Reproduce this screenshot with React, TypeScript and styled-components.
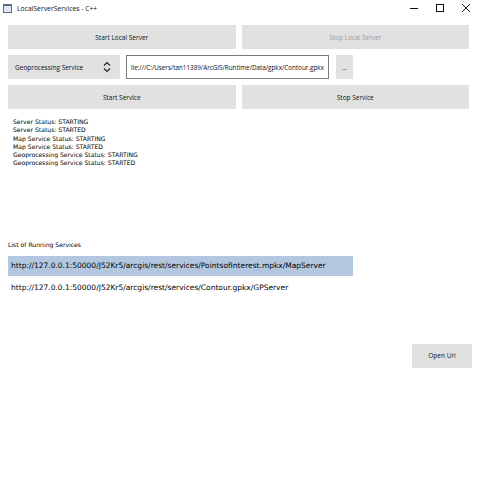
import styled, { createGlobalStyle } from 'styled-components';

const GlobalStyle = createGlobalStyle`
  html, body {
    margin: 0;
    padding: 0;
    background: #ffffff;
  }
  body {
    font-family: 'Liberation Sans', Arial, sans-serif;
    color: #000000;
  }
`;

const runningServices = [
  'http://127.0.0.1:50000/J52Kr5/arcgis/rest/services/PointsofInterest.mpkx/MapServer',
  'http://127.0.0.1:50000/J52Kr5/arcgis/rest/services/Contour.gpkx/GPServer',
];

const statusLines = [
  'Server Status: STARTING',
  'Server Status: STARTED',
  'Map Service Status: STARTING',
  'Map Service Status: STARTED',
  'Geoprocessing Service Status: STARTING',
  'Geoprocessing Service Status: STARTED',
];

const App = (): JSX.Element => {
  return (
    <>
      <GlobalStyle />
      <Window>
        <TitleBar>
          <TitleLeft>
            <AppIcon />
            <Title>LocalServerServices - C++</Title>
          </TitleLeft>
          <WindowControls>
            <ControlButton>
              <svg width="10" height="10" viewBox="0 0 10 10">
                <line x1="1" y1="5.5" x2="9" y2="5.5" stroke="#111" strokeWidth="1" />
              </svg>
            </ControlButton>
            <ControlButton>
              <svg width="10" height="10" viewBox="0 0 10 10">
                <rect x="1.5" y="1.5" width="7" height="7" fill="none" stroke="#111" strokeWidth="1" />
              </svg>
            </ControlButton>
            <ControlButton>
              <svg width="10" height="10" viewBox="0 0 10 10">
                <path d="M1 1 L9 9 M9 1 L1 9" stroke="#111" strokeWidth="1" />
              </svg>
            </ControlButton>
          </WindowControls>
        </TitleBar>

        <Content>
          <ButtonRow>
            <PushButton>Start Local Server</PushButton>
            <PushButton disabled>Stop Local Server</PushButton>
          </ButtonRow>

          <ServiceRow>
            <ComboBox>
              <span>Geoprocessing Service</span>
              <svg width="8" height="12" viewBox="0 0 8 12">
                <path d="M1 4.5 L4 1.5 L7 4.5 M1 7.5 L4 10.5 L7 7.5" fill="none" stroke="#222" strokeWidth="1.2" />
              </svg>
            </ComboBox>
            <PathField>lle:///C:/Users/tan11389/ArcGIS/Runtime/Data/gpkx/Contour.gpkx</PathField>
            <BrowseButton>...</BrowseButton>
          </ServiceRow>

          <ButtonRow>
            <PushButton>Start Service</PushButton>
            <PushButton>Stop Service</PushButton>
          </ButtonRow>

          <StatusLog>
            {statusLines.map((line, index) => (
              <StatusLine key={`${line}-${index}`}>{line}</StatusLine>
            ))}
          </StatusLog>

          <ListLabel>List of Running Services</ListLabel>
          <ServiceList>
            {runningServices.map((url, index) => (
              <ServiceItem key={url} selected={index === 0}>
                {url}
              </ServiceItem>
            ))}
          </ServiceList>

          <FooterRow>
            <OpenButton>Open Url</OpenButton>
          </FooterRow>
        </Content>
      </Window>
    </>
  );
};

const Window = styled.div`
  width: 500px;
  height: 500px;
  background: #ffffff;
`;

const TitleBar = styled.div`
  display: flex;
  align-items: center;
  justify-content: space-between;
  height: 16px;
  padding: 0 0 0 3px;
`;

const TitleLeft = styled.div`
  display: flex;
  align-items: center;
  gap: 5px;
`;

const AppIcon = styled.div`
  width: 7px;
  height: 6px;
  border: 1px solid #5a6b80;
  border-top-width: 2px;
  background: #dfe8f2;
`;

const Title = styled.span`
  font-family: 'Open Sans', 'Liberation Sans', sans-serif;
  font-size: 6.8px;
  color: #111;
`;

const WindowControls = styled.div`
  display: flex;
  align-items: center;
  padding-right: 29px;
  gap: 16px;
`;

const ControlButton = styled.div`
  width: 10px;
  height: 10px;
  display: flex;
`;

const Content = styled.div`
  display: flex;
  flex-direction: column;
  padding: 9px 31px 0 8px;
`;

const ButtonRow = styled.div`
  display: grid;
  grid-template-columns: 1fr 1fr;
  gap: 6px;
  margin-bottom: 6px;
`;

const PushButton = styled.div<{ disabled?: boolean }>`
  height: 24px;
  display: flex;
  align-items: center;
  justify-content: center;
  background: #e1e1e1;
  font-family: 'Open Sans', 'Liberation Sans', sans-serif;
  font-size: 6.5px;
  color: ${(p) => (p.disabled ? '#9a9a9a' : '#111')};
`;

const ServiceRow = styled.div`
  display: flex;
  align-items: stretch;
  margin-bottom: 6px;
  height: 24px;
`;

const ComboBox = styled.div`
  width: 112px;
  display: flex;
  align-items: center;
  justify-content: space-between;
  padding: 0 9px 0 7px;
  box-sizing: border-box;
  background: #e1e1e1;
  font-family: 'Open Sans', 'Liberation Sans', sans-serif;
  font-size: 6.5px;
  color: #111;
`;

const PathField = styled.div`
  width: 203px;
  margin-left: 6px;
  box-sizing: border-box;
  border: 1px solid #7a7a7a;
  background: #fff;
  display: flex;
  align-items: center;
  padding-left: 4px;
  overflow: hidden;
  white-space: nowrap;
  font-family: 'Open Sans', 'Liberation Sans', sans-serif;
  font-size: 6.3px;
  color: #111;
`;

const BrowseButton = styled.div`
  width: 17px;
  margin-left: 7px;
  display: flex;
  align-items: center;
  justify-content: center;
  background: #e1e1e1;
  font-family: 'Open Sans', 'Liberation Sans', sans-serif;
  font-size: 6.5px;
  color: #333;
`;

const StatusLog = styled.div`
  display: flex;
  flex-direction: column;
  padding: 3px 0 0 5px;
`;

const StatusLine = styled.div`
  font-family: 'DejaVu Sans', Tahoma, sans-serif;
  font-size: 6.1px;
  line-height: 8.3px;
  color: #000;
`;

const ListLabel = styled.div`
  margin-top: 73px;
  font-family: 'DejaVu Sans', Tahoma, sans-serif;
  font-size: 6.1px;
  line-height: 8px;
  color: #000;
`;

const ServiceList = styled.div`
  width: 345px;
  margin-top: 7px;
  display: flex;
  flex-direction: column;
`;

const ServiceItem = styled.div<{ selected?: boolean }>`
  height: 20px;
  flex-shrink: 0;
  display: flex;
  align-items: center;
  padding-left: 3px;
  white-space: nowrap;
  background: ${(p) => (p.selected ? '#b3c8e0' : 'transparent')};
  font-family: 'DejaVu Sans', Tahoma, sans-serif;
  font-size: 7.5px;
  color: #000;

  & + & {
    margin-top: 2px;
  }
`;

const FooterRow = styled.div`
  display: flex;
  justify-content: flex-end;
  margin: 46px -3px 0 0;
`;

const OpenButton = styled.div`
  width: 60px;
  height: 24px;
  display: flex;
  align-items: center;
  justify-content: center;
  background: #e1e1e1;
  font-family: 'Open Sans', 'Liberation Sans', sans-serif;
  font-size: 6.5px;
  color: #111;
`;

export default App;
